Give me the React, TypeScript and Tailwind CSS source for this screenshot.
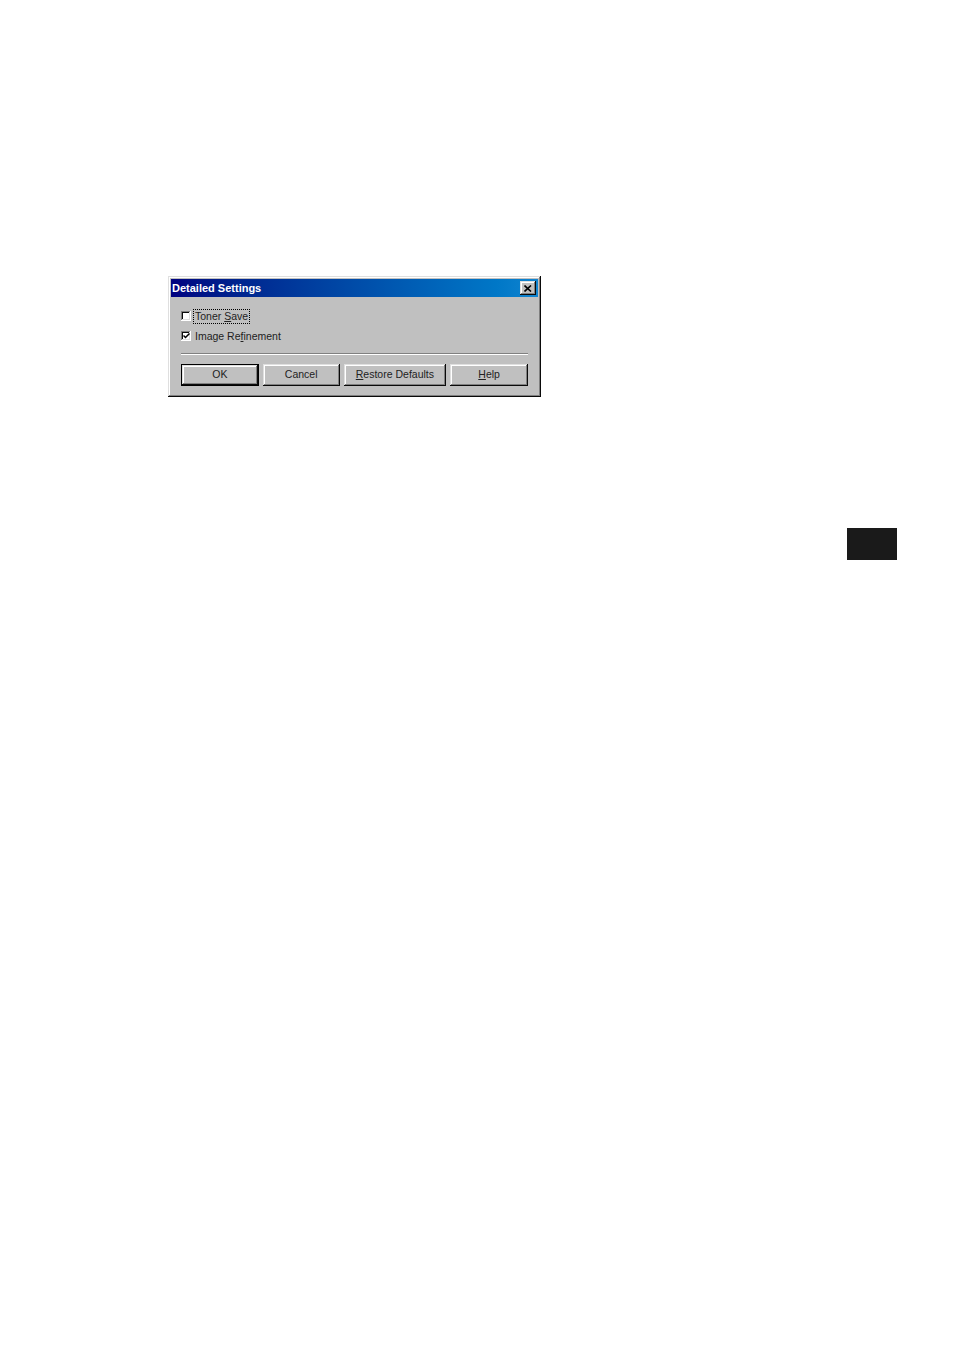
import React from "react";

const raised =
  "shadow-[inset_-1px_-1px_#0a0a0a,inset_1px_1px_#dfdfdf,inset_-2px_-2px_#808080,inset_2px_2px_#ffffff]";
const sunken =
  "shadow-[inset_-1px_-1px_#ffffff,inset_1px_1px_#808080,inset_-2px_-2px_#dfdfdf,inset_2px_2px_#0a0a0a]";

function Checkbox({ checked }: { checked?: boolean }) {
  return (
    <div className={`w-[10px] h-[10px] bg-white flex items-center justify-center shrink-0 ${sunken}`}>
      {checked && (
        <svg width="7" height="6" viewBox="0 0 7 6">
          <path d="M0.5 2.5 L2.5 4.5 L6.5 0.5" stroke="#000" strokeWidth="1.5" fill="none" />
        </svg>
      )}
    </div>
  );
}

function Button({
  width,
  isDefault,
  children,
}: {
  width: string;
  isDefault?: boolean;
  children: React.ReactNode;
}) {
  return (
    <div className={`${width} h-[22px] ${isDefault ? "border border-black" : ""}`}>
      <div className={`w-full h-full bg-[#c0c0c0] flex items-center justify-center text-[10.5px] text-[#222] ${raised}`}>
        {children}
      </div>
    </div>
  );
}

export default function App() {
  return (
    <div className="min-h-[1350px] bg-white font-['Liberation_Sans',Arial,sans-serif] pt-[276px] pl-[168px]">
      {/* Dialog */}
      <div className={`w-[373px] h-[121px] bg-[#c0c0c0] p-[3px] flex flex-col ${raised}`}>
        {/* Title bar */}
        <div className="h-[18px] bg-gradient-to-r from-[#000080] to-[#1084d0] flex items-center justify-between pl-[1px] pr-[2px]">
          <span className="text-white font-bold text-[11px] leading-none">Detailed Settings</span>
          <div className={`w-[16px] h-[14px] bg-[#c0c0c0] flex items-center justify-center ${raised}`}>
            <svg width="8" height="7" viewBox="0 0 8 7">
              <path d="M0.5 0.5 L7 6.5 M7 0.5 L0.5 6.5" stroke="#000" strokeWidth="1.6" fill="none" />
            </svg>
          </div>
        </div>

        {/* Content */}
        <div className="flex flex-col px-[10px] pt-[9px]">
          <div className="h-[20px] flex items-center gap-[3px]">
            <Checkbox />
            <span className="text-[10.5px] text-[#222] leading-[13px] px-[1px] outline outline-1 outline-dotted outline-black">
              Toner <span className="underline">S</span>ave
            </span>
          </div>
          <div className="h-[20px] flex items-center gap-[4px]">
            <Checkbox checked />
            <span className="text-[10.5px] text-[#222] leading-[13px]">
              Image Re<span className="underline">f</span>inement
            </span>
          </div>

          <div className="mt-[7px] h-[2px] border-t border-t-[#808080] border-b border-b-white" />

          <div className="mt-[9px] flex gap-[4px]">
            <Button width="w-[78px]" isDefault>
              OK
            </Button>
            <Button width="w-[77px]">Cancel</Button>
            <Button width="w-[103px]">
              <span>
                <span className="underline">R</span>estore Defaults
              </span>
            </Button>
            <Button width="w-[78px]">
              <span>
                <span className="underline">H</span>elp
              </span>
            </Button>
          </div>
        </div>
      </div>

      {/* Thumb index tab */}
      <div className="mt-[131px] ml-[679px] w-[50px] h-[32px] bg-[#1a1a1a]" />
    </div>
  );
}
